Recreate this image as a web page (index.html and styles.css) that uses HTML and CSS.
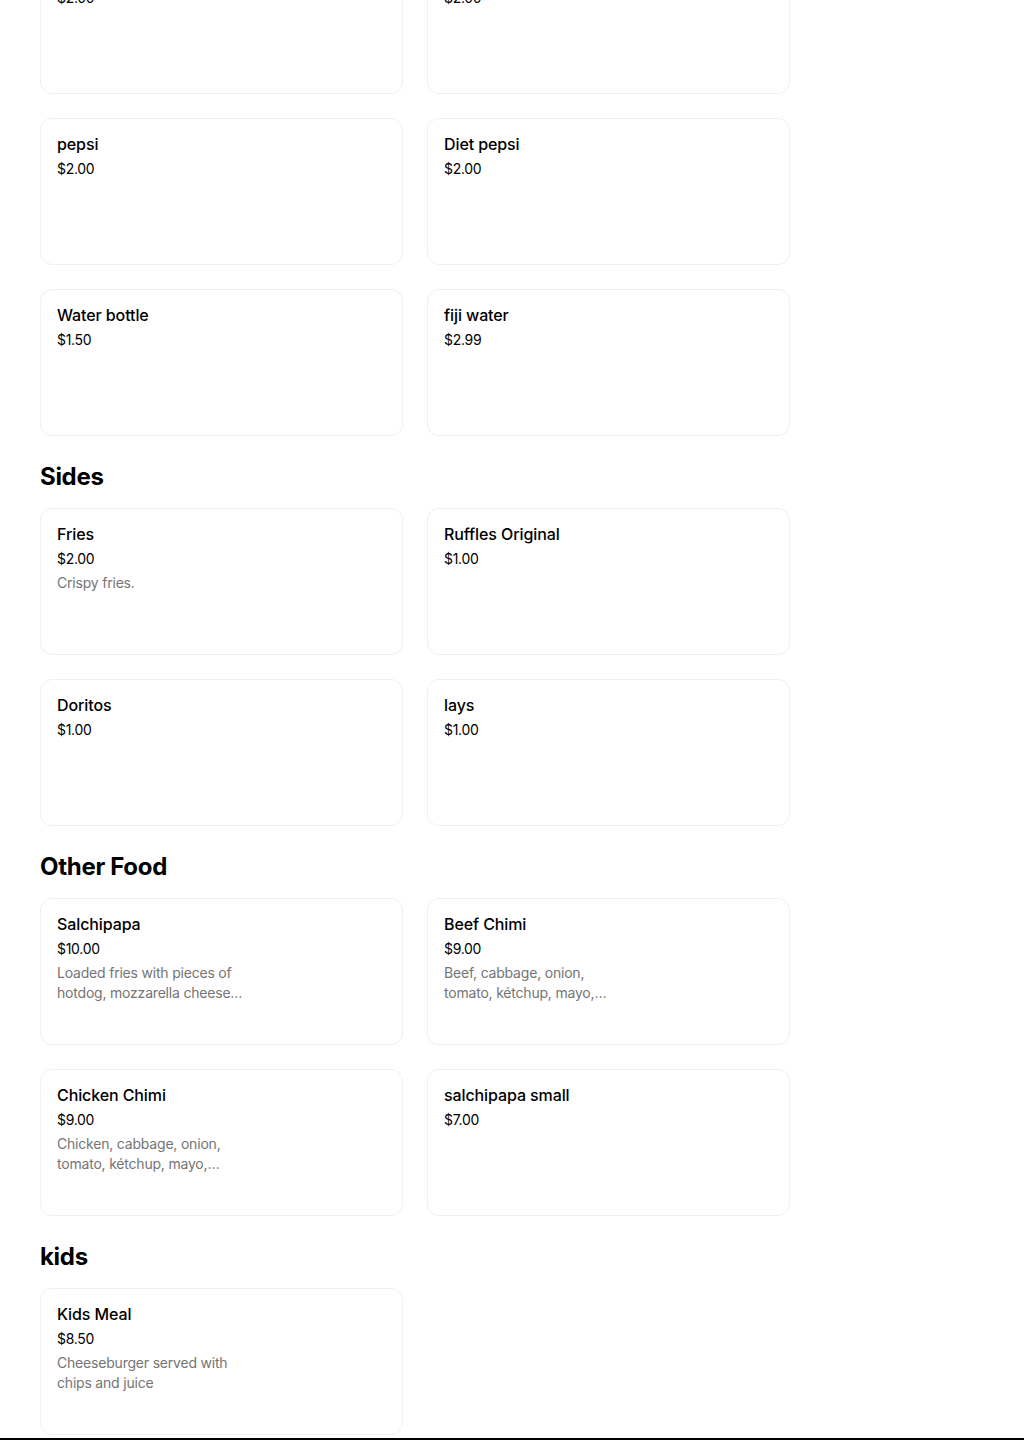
FILE: index.html
```html
<!DOCTYPE html>
<html lang="en">
<head>
<meta charset="utf-8">
<title>Menu</title>
<link rel="stylesheet" href="styles.css">
</head>
<body>
<main class="menu">
  <section class="section section-first">
    <div class="grid">
      <div class="card"><div class="title">Coca-Cola</div><div class="price">$2.00</div></div>
      <div class="card"><div class="title">Sprite</div><div class="price">$2.00</div></div>
      <div class="card"><div class="title">pepsi</div><div class="price">$2.00</div></div>
      <div class="card"><div class="title">Diet pepsi</div><div class="price">$2.00</div></div>
      <div class="card"><div class="title">Water bottle</div><div class="price">$1.50</div></div>
      <div class="card"><div class="title">fiji water</div><div class="price">$2.99</div></div>
    </div>
  </section>
  <section class="section">
    <h2 class="heading">Sides</h2>
    <div class="grid">
      <div class="card"><div class="title">Fries</div><div class="price">$2.00</div><div class="desc">Crispy fries.</div></div>
      <div class="card"><div class="title">Ruffles Original</div><div class="price">$1.00</div></div>
      <div class="card"><div class="title">Doritos</div><div class="price">$1.00</div></div>
      <div class="card"><div class="title">lays</div><div class="price">$1.00</div></div>
    </div>
  </section>
  <section class="section">
    <h2 class="heading">Other Food</h2>
    <div class="grid">
      <div class="card"><div class="title">Salchipapa</div><div class="price">$10.00</div><div class="desc">Loaded fries with pieces of hotdog, mozzarella cheese…</div></div>
      <div class="card"><div class="title">Beef Chimi</div><div class="price">$9.00</div><div class="desc">Beef, cabbage, onion, tomato, kétchup, mayo,…</div></div>
      <div class="card"><div class="title">Chicken Chimi</div><div class="price">$9.00</div><div class="desc">Chicken, cabbage, onion, tomato, kétchup, mayo,…</div></div>
      <div class="card"><div class="title">salchipapa small</div><div class="price">$7.00</div></div>
    </div>
  </section>
  <section class="section">
    <h2 class="heading">kids</h2>
    <div class="grid">
      <div class="card"><div class="title">Kids Meal</div><div class="price">$8.50</div><div class="desc">Cheeseburger served with chips and juice</div></div>
    </div>
  </section>
</main>
<footer class="footer"></footer>
</body>
</html>
```

FILE: styles.css
```css
html, body {
  margin: 0;
  padding: 0;
  background: #ffffff;
}
body {
  font-family: Inter, "Noto Sans", Roboto, sans-serif;
  color: #000000;
}
.menu {
  width: 750px;
  padding-left: 40px;
  margin-top: -53px;
  padding-bottom: 3px;
}
.section {
  margin-bottom: 24px;
}
.section:last-child {
  margin-bottom: 0;
}
.heading {
  margin: 0 0 15px 0;
  padding-top: 1px;
  font-size: 24px;
  line-height: 32px;
  font-weight: 700;
  letter-spacing: -0.3px;
}
.grid {
  display: grid;
  grid-template-columns: 1fr 1fr;
  gap: 24px;
}
.card {
  box-sizing: border-box;
  height: 147px;
  border: 1px solid #f0f0f0;
  border-radius: 12px;
  padding: 15px 16px 16px 16px;
  display: flex;
  flex-direction: column;
  gap: 4px;
}
.title {
  font-size: 16px;
  line-height: 20px;
  font-weight: 500;
  letter-spacing: -0.1px;
}
.price {
  margin-top: 1px;
  font-size: 14px;
  line-height: 20px;
  font-weight: 400;
  letter-spacing: -0.3px;
}
.desc {
  font-size: 14px;
  line-height: 20px;
  color: #757575;
  max-width: 188px;
  letter-spacing: -0.2px;
  display: -webkit-box;
  -webkit-line-clamp: 2;
  -webkit-box-orient: vertical;
  overflow: hidden;
}
.footer {
  height: 40px;
  background: #000000;
}
```
